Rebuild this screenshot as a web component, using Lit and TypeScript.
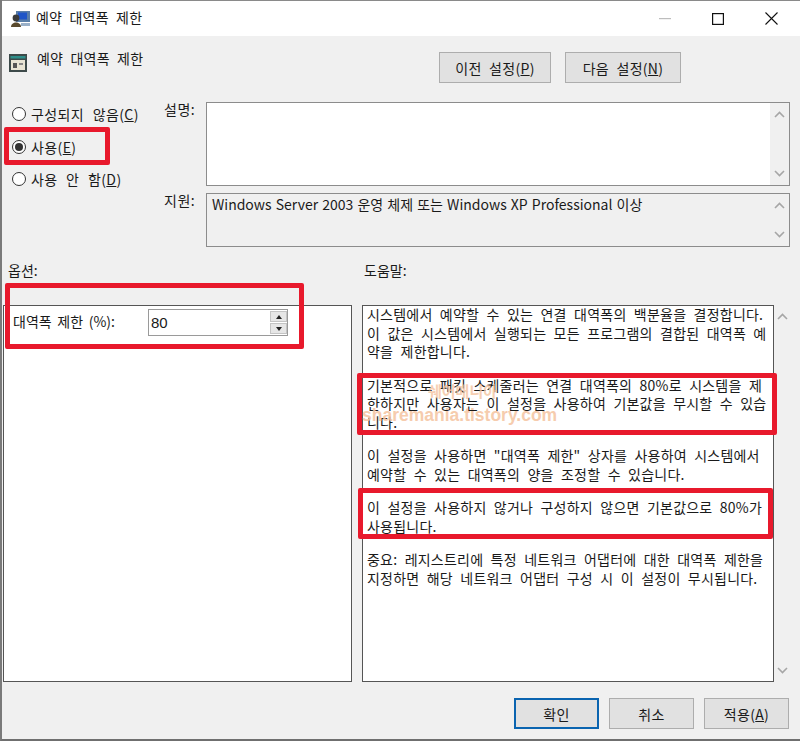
import { LitElement, html, css, svg } from "lit";
import { customElement } from "lit/decorators.js";

const chevUp = svg`<svg class="chev" width="11" height="7" viewBox="0 0 11 7"><path d="M1 6 L5.5 1.5 L10 6" fill="none" stroke="#a6a6a6" stroke-width="1.6"/></svg>`;
const chevDown = svg`<svg class="chev" width="11" height="7" viewBox="0 0 11 7"><path d="M1 1 L5.5 5.5 L10 1" fill="none" stroke="#a6a6a6" stroke-width="1.6"/></svg>`;

@customElement("app-root")
export class AppRoot extends LitElement {
  static styles = css`
    :host {
      display: block;
      width: 800px;
      height: 741px;
      overflow: hidden;
      position: relative;
      font-family: "Noto Sans CJK KR", "Noto Sans", sans-serif;
      font-size: 14px;
      color: #1a1a1a;
      background: #f0f0f0;
    }
    .window {
      height: 741px;
      box-sizing: border-box;
      border-left: 2px solid #7a7a7a;
      border-bottom: 2px solid #6f6f6f;
      display: flex;
      flex-direction: column;
    }
    .titlebar {
      height: 36px;
      flex: none;
      background: #fff;
      border-top: 1px solid #8a8a8a;
      box-sizing: border-box;
      display: flex;
      align-items: center;
      padding-left: 8px;
      gap: 4px;
    }
    .titletext { flex: 1; line-height: 20px; word-spacing: 4px; letter-spacing: 0.2px; margin-top: -3px; }
    .winbtns { display: flex; align-items: center; padding-right: 22px; gap: 41px; }
    .winbtns svg { display: block; }
    .body { flex: 1; display: flex; flex-direction: column; min-height: 0; }
    .head {
      height: 61px;
      flex: none;
      display: flex;
      box-sizing: border-box;
      padding: 17px 119px 0 6px;
    }
    .head-title { margin-left: 9px; line-height: 11px; height: 20px; flex: 1; word-spacing: 4px; letter-spacing: 0.2px; }
    .btn {
      box-sizing: border-box;
      height: 31px;
      background: #e1e1e1;
      border: 1.5px solid #adadad;
      display: flex;
      align-items: center;
      justify-content: center;
      line-height: 20px;
      word-spacing: 4px;
      letter-spacing: 0.3px;
    }
    .top-btns { display: flex; gap: 14px; margin-top: -1px; }
    .prev { width: 112px; }
    .next { width: 116px; }
    u { text-underline-offset: 1px; }
    .settings { display: flex; height: 153px; flex: none; }
    .radios {
      width: 162px;
      flex: none;
      box-sizing: border-box;
      padding: 7px 0 0 10px;
      display: flex;
      flex-direction: column;
      gap: 12.5px;
    }
    .radio { display: flex; align-items: center; gap: 5px; height: 20px; white-space: nowrap; word-spacing: 5px; letter-spacing: 0.4px; }
    .dot {
      width: 14px; height: 14px; border-radius: 50%;
      border: 1.5px solid #333; background: #fff; box-sizing: border-box;
      display: flex; align-items: center; justify-content: center; flex: none;
    }
    .dot.on::after { content: ""; width: 8px; height: 8px; border-radius: 50%; background: #333; }
    .fields { flex: 1; padding-right: 10px; display: flex; flex-direction: column; gap: 7px; padding-top: 5px; }
    .field { display: flex; }
    .field-label { width: 42px; flex: none; line-height: 20px; margin-top: -3px; letter-spacing: 0.5px; }
    .box {
      flex: 1;
      box-sizing: border-box;
      border: 1.5px solid #8c8c8c;
      display: flex;
      justify-content: space-between;
    }
    .desc { height: 84px; background: #fff; }
    .support { height: 54px; background: #f0f0f0; }
    .support-text { line-height: 20px; padding: 0 0 0 5px; word-spacing: 1px; }
    .scroll {
      width: 19px;
      flex: none;
      background: #f0f0f0;
      display: flex;
      flex-direction: column;
      justify-content: space-between;
      align-items: center;
      padding: 8px 0;
      box-sizing: border-box;
    }
    .chev { display: block; }
    .section-labels { display: flex; height: 55px; flex: none; padding: 10px 0 0 6px; box-sizing: border-box; line-height: 20px; }
    .section-labels .opt { width: 356px; }
    .panels { display: flex; flex: none; height: 377px; padding-left: 1px; }
    .panel-left {
      width: 349px;
      box-sizing: border-box;
      background: #fff;
      border: 1.5px solid #555;
      flex: none;
      display: flex;
      align-items: flex-start;
      padding: 2px 0 0 9px;
    }
    .bw-label { width: 135px; line-height: 26px; word-spacing: 2.5px; flex: none; white-space: nowrap; }
    .spin {
      width: 140px; height: 27px;
      box-sizing: border-box;
      border: 1px solid #9a9a9a;
      display: flex;
      align-items: center;
      justify-content: space-between;
      margin-top: 1px;
      padding-left: 2px;
    }
    .spin span { font-family: "Liberation Sans", sans-serif; font-size: 15px; }
    .spin-btns { display: flex; flex-direction: column; gap: 1px; }
    .spin-btn { width: 17px; height: 11px; background: #e6e6e6; border: 1px solid #c4c4c4; box-sizing: border-box; display: flex; align-items: center; justify-content: center; }
    .tri-up { width: 0; height: 0; border-left: 3.5px solid transparent; border-right: 3.5px solid transparent; border-bottom: 4px solid #222; }
    .tri-down { width: 0; height: 0; border-left: 3.5px solid transparent; border-right: 3.5px solid transparent; border-top: 4px solid #222; }
    .panel-right {
      margin-left: 10px;
      width: 412px;
      flex: none;
      box-sizing: border-box;
      background: #fff;
      border: 1.5px solid #555;
      padding: 0 0 0 4px;
      line-height: 18.5px;
      white-space: nowrap;
      word-spacing: 4px;
      letter-spacing: 0.22px;
    }
    .panel-right p { margin: 0 0 15px; }
    .panel-right p:first-child { margin-top: -1px; }
    .panel-scroll { width: 17px; flex: none; display: flex; flex-direction: column; justify-content: space-between; align-items: center; padding: 8px 0; box-sizing: border-box; }
    .footer { display: flex; justify-content: flex-end; gap: 10px; padding: 16px 11px 0 0; }
    .footer .btn { width: 85px; }
    .default { border: 2px solid #0a64b0; }
    .mark { position: absolute; border: 5px solid #e8192c; border-radius: 2px; box-sizing: border-box; pointer-events: none; }
    .m1 { left: 4px; top: 127px; width: 106px; height: 38px; }
    .m2 { left: 5px; top: 283px; width: 299px; height: 66px; }
    .m3 { left: 357px; top: 373px; width: 420px; height: 62px; }
    .m4 { left: 358px; top: 488px; width: 415px; height: 51px; }
    .wm { position: absolute; left: 362px; top: 405px; color: #f5c4a0; font: bold 17.5px "Liberation Sans", sans-serif; opacity: .85; white-space: nowrap; }
    .wm-ko { position: absolute; left: 428px; top: 380px; color: #f5c4a0; font-weight: 700; font-size: 15px; opacity: .8; white-space: nowrap; }
  `;

  render() {
    return html`
      <div class="window">
        <div class="titlebar">
          <svg width="22" height="20" viewBox="0 0 22 20">
            <rect x="6" y="2" width="14" height="11" fill="#5a7ea8"/>
            <rect x="8" y="3.5" width="9" height="7" fill="#1f55c8"/>
            <circle cx="6" cy="9" r="3.4" fill="#3b3b3b"/>
            <path d="M1 18 C1 12 11 12 11 18 Z" fill="#5a4a2e"/>
            <rect x="11" y="14" width="9" height="3" fill="#9ab0c8"/>
          </svg>
          <div class="titletext">예약 대역폭 제한</div>
          <div class="winbtns">
            <svg width="12" height="2" viewBox="0 0 12 2"><rect width="12" height="1.2" fill="#bdbdbd"/></svg>
            <svg width="12" height="12" viewBox="0 0 12 12"><rect x=".6" y=".6" width="10.8" height="10.8" fill="none" stroke="#111" stroke-width="1.2"/></svg>
            <svg width="13" height="13" viewBox="0 0 13 13"><path d="M.5 .5 L12.5 12.5 M12.5 .5 L.5 12.5" stroke="#111" stroke-width="1.1" fill="none"/></svg>
          </div>
        </div>
        <div class="body">
          <div class="head">
            <svg width="20" height="20" viewBox="0 0 20 20">
              <rect x="1" y="1" width="18" height="18" fill="#3d4a4a"/>
              <rect x="2.5" y="3" width="15" height="2.5" fill="#2f8f8a"/>
              <rect x="3" y="7" width="14" height="10" fill="#e8e4d4"/>
              <rect x="5" y="10" width="4" height="5" fill="#555"/>
              <rect x="11" y="10" width="4" height="2" fill="#888"/>
            </svg>
            <div class="head-title">예약 대역폭 제한</div>
            <div class="top-btns">
              <div class="btn prev"><span>이전 설정(<u>P</u>)</span></div>
              <div class="btn next"><span>다음 설정(<u>N</u>)</span></div>
            </div>
          </div>
          <div class="settings">
            <div class="radios">
              <div class="radio"><span class="dot"></span><span>구성되지 않음(<u>C</u>)</span></div>
              <div class="radio"><span class="dot on"></span><span>사용(<u>E</u>)</span></div>
              <div class="radio"><span class="dot"></span><span>사용 안 함(<u>D</u>)</span></div>
            </div>
            <div class="fields">
              <div class="field">
                <div class="field-label">설명:</div>
                <div class="box desc">
                  <div></div>
                  <div class="scroll">${chevUp}${chevDown}</div>
                </div>
              </div>
              <div class="field">
                <div class="field-label">지원:</div>
                <div class="box support">
                  <div class="support-text">Windows Server 2003 운영 체제 또는 Windows XP Professional 이상</div>
                  <div class="scroll">${chevUp}${chevDown}</div>
                </div>
              </div>
            </div>
          </div>
          <div class="section-labels">
            <div class="opt">옵션:</div>
            <div>도움말:</div>
          </div>
          <div class="panels">
            <div class="panel-left">
              <div class="bw-label">대역폭 제한 (%):</div>
              <div class="spin">
                <span>80</span>
                <div class="spin-btns">
                  <div class="spin-btn"><div class="tri-up"></div></div>
                  <div class="spin-btn"><div class="tri-down"></div></div>
                </div>
              </div>
            </div>
            <div class="panel-right">
              <p>시스템에서 예약할 수 있는 연결 대역폭의 백분율을 결정합니다.<br>이 값은 시스템에서 실행되는 모든 프로그램의 결합된 대역폭 예<br>약을 제한합니다.</p>
              <p>기본적으로 패킷 스케줄러는 연결 대역폭의 80%로 시스템을 제<br>한하지만 사용자는 이 설정을 사용하여 기본값을 무시할 수 있습<br>니다.</p>
              <p>이 설정을 사용하면 "대역폭 제한" 상자를 사용하여 시스템에서<br>예약할 수 있는 대역폭의 양을 조정할 수 있습니다.</p>
              <p>이 설정을 사용하지 않거나 구성하지 않으면 기본값으로 80%가<br>사용됩니다.</p>
              <p>중요: 레지스트리에 특정 네트워크 어댑터에 대한 대역폭 제한을<br>지정하면 해당 네트워크 어댑터 구성 시 이 설정이 무시됩니다.</p>
            </div>
            <div class="panel-scroll">${chevUp}${chevDown}</div>
          </div>
          <div class="footer">
            <div class="btn default">확인</div>
            <div class="btn">취소</div>
            <div class="btn"><span>적용(<u>A</u>)</span></div>
          </div>
        </div>
      </div>
      <div class="wm-ko">쉐어매니아</div>
      <div class="wm">sharemania.tistory.com</div>
      <div class="mark m1"></div>
      <div class="mark m2"></div>
      <div class="mark m3"></div>
      <div class="mark m4"></div>
    `;
  }
}
